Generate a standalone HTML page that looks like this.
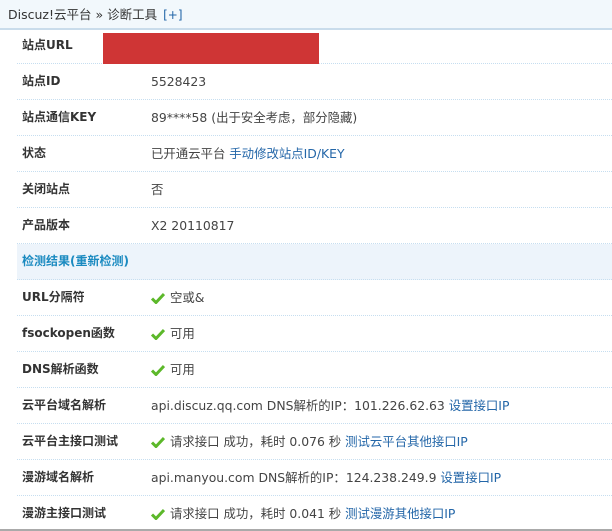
<!DOCTYPE html>
<html><head><meta charset="utf-8"><style>
body{margin:0;width:612px;height:531px;overflow:hidden;background:#fff;font-family:"DejaVu Sans","Noto Sans CJK SC",sans-serif;font-size:12px;color:#444;position:relative}
.top{position:absolute;left:0;top:0;width:612px;height:28px;background:#f2f8fc;border-bottom:2px solid #c9dceb;line-height:29px}
.top span{margin-left:8px;color:#333;font-size:12.5px}
.top a{color:#2366a8;margin-left:6px}
.row{position:absolute;left:17px;width:595px;height:35px;border-bottom:1px dotted #c6def0;line-height:35px}
.l{position:absolute;left:5px;font-weight:bold;color:#333}
.v{position:absolute;left:134px;white-space:nowrap;font-size:12.4px}
a{color:#2366a8;text-decoration:none}
.ck{display:inline-block;width:14px;height:12px;vertical-align:-2px;margin-right:5px}
.hd{background:#edf4fb}
.hd .l{color:#1a8ac0}
</style></head><body>
<div class="top"><span>Discuz!云平台 » 诊断工具</span><a>[+]</a></div>
<div class="row" style="top:28px"><span class="l">站点URL</span></div>
<div style="position:absolute;left:103px;top:33px;width:216px;height:31px;background:#cf3535"></div>
<div class="row" style="top:64px"><span class="l">站点ID</span><span class="v">5528423</span></div>
<div class="row" style="top:100px"><span class="l">站点通信KEY</span><span class="v">89****58 (出于安全考虑，部分隐藏)</span></div>
<div class="row" style="top:136px"><span class="l">状态</span><span class="v">已开通云平台 <a>手动修改站点ID/KEY</a></span></div>
<div class="row" style="top:172px"><span class="l">关闭站点</span><span class="v">否</span></div>
<div class="row" style="top:208px"><span class="l">产品版本</span><span class="v">X2 20110817</span></div>
<div class="row hd" style="top:244px"><span class="l">检测结果(重新检测)</span></div>
<svg width="0" height="0" style="position:absolute"><defs><symbol id="c" viewBox="0 0 14 12"><path d="M1 6.5 L5 10.5 L13 2" fill="none" stroke="#5cb82a" stroke-width="3"/></symbol></defs></svg>
<div class="row" style="top:280px"><span class="l">URL分隔符</span><span class="v"><svg class="ck"><use href="#c"/></svg>空或&amp;</span></div>
<div class="row" style="top:316px"><span class="l">fsockopen函数</span><span class="v"><svg class="ck"><use href="#c"/></svg>可用</span></div>
<div class="row" style="top:352px"><span class="l">DNS解析函数</span><span class="v"><svg class="ck"><use href="#c"/></svg>可用</span></div>
<div class="row" style="top:388px"><span class="l">云平台域名解析</span><span class="v">api.discuz.qq.com DNS解析的IP：101.226.62.63 <a>设置接口IP</a></span></div>
<div class="row" style="top:424px"><span class="l">云平台主接口测试</span><span class="v"><svg class="ck"><use href="#c"/></svg>请求接口 成功，耗时 0.076 秒 <a>测试云平台其他接口IP</a></span></div>
<div class="row" style="top:460px"><span class="l">漫游域名解析</span><span class="v">api.manyou.com DNS解析的IP：124.238.249.9 <a>设置接口IP</a></span></div>
<div class="row" style="top:496px;border:none"><span class="l">漫游主接口测试</span><span class="v"><svg class="ck"><use href="#c"/></svg>请求接口 成功，耗时 0.041 秒 <a>测试漫游其他接口IP</a></span></div>
<div style="position:absolute;left:0;top:529px;width:612px;height:2px;background:#aaa"></div>
</body></html>
